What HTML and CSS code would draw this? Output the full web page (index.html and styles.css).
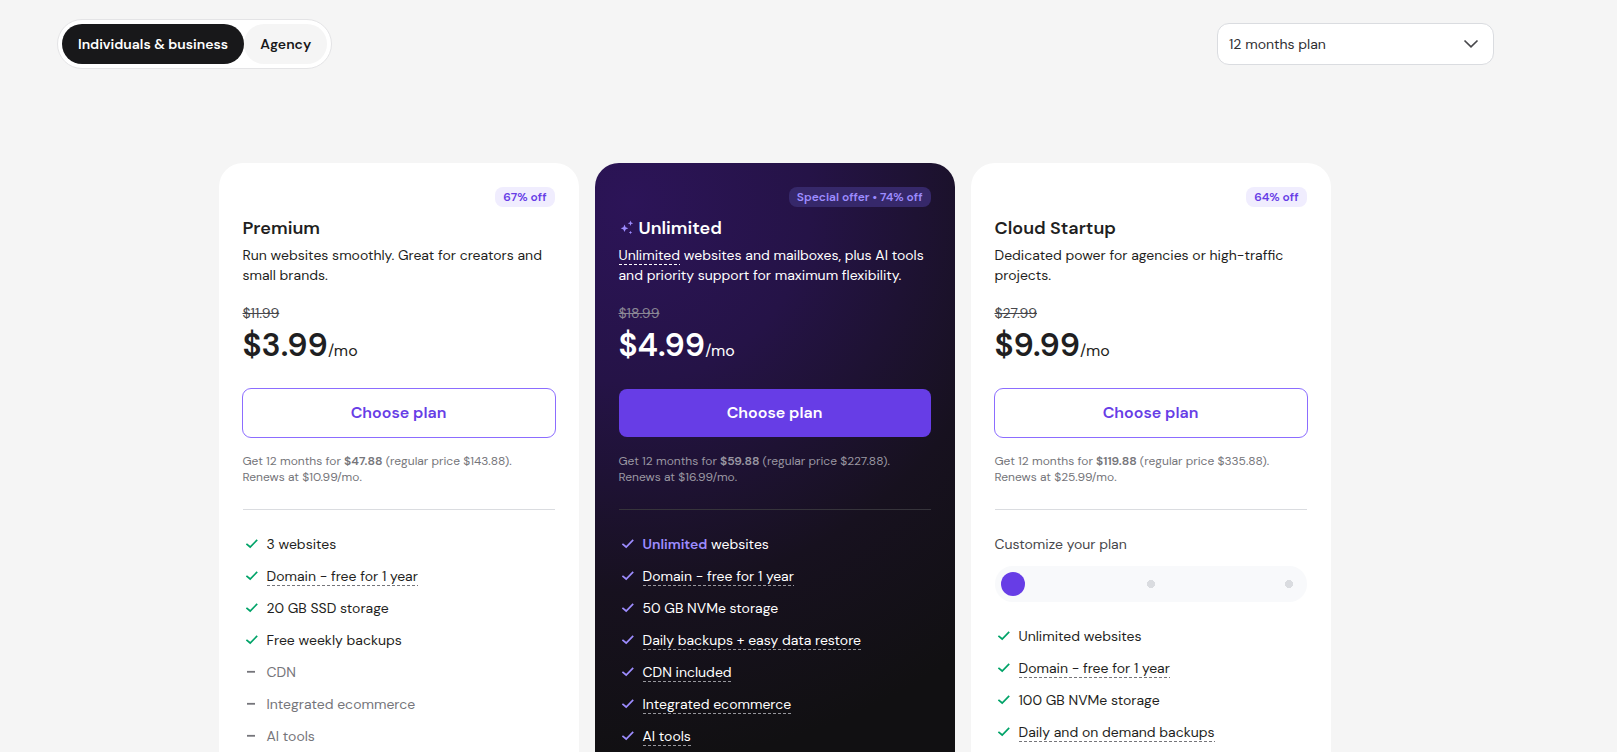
FILE: index.html
```html
<!DOCTYPE html>
<html lang="en">
<head>
<meta charset="utf-8">
<meta name="viewport" content="width=device-width, initial-scale=1">
<title>Hosting plans</title>
<link rel="stylesheet" href="styles.css">
</head>
<body>
<svg class="sprite" aria-hidden="true">
  <symbol id="check" viewBox="0 0 20 20"><path d="M3.400 9.800 7.200 13 14.200 5.900" fill="none" stroke="currentColor" stroke-width="1.700"/></symbol>
  <symbol id="dash" viewBox="0 0 20 20"><path d="M4 9.800H12" fill="none" stroke="currentColor" stroke-width="1.800"/></symbol>
  <symbol id="sparkles" viewBox="0 0 20 20"><path fill="currentColor" d="M5.500 6.500L6.600 9.200L9.300 10.300L6.600 11.400L5.500 14.100L4.400 11.400L1.700 10.300L4.400 9.200ZM11.500 2.500L12.200 4.600L14.300 5.300L12.200 6L11.500 8.100L10.800 6L8.700 5.300L10.800 4.600ZM11.500 12.700L12 14L13.300 14.500L12 15L11.500 16.300L11 15L9.700 14.500L11 14Z"/></symbol>
</svg>
<main class="pricing">
  <div class="toolbar">
    <div class="tabs" role="tablist">
      <button class="tab tab--active" role="tab" aria-selected="true">Individuals &amp; business</button>
      <button class="tab" role="tab" aria-selected="false">Agency</button>
    </div>
    <div class="period">
      <select class="period__select" aria-label="Billing period"><option>12 months plan</option></select>
      <svg class="period__arrow" viewBox="0 0 20 20" aria-hidden="true"><path d="M2.500 6.500 9 12.800 15.500 6.500" fill="none" stroke="currentColor" stroke-width="1.700"/></svg>
    </div>
  </div>

  <div class="cards">
    <article class="card">
      <span class="badge">67% off</span>
      <h2 class="card__title">Premium</h2>
      <p class="card__text">Run websites smoothly. Great for creators and small brands.</p>
      <s class="card__old">$11.99</s>
      <p class="card__price">$3.99<span class="card__unit">/mo</span></p>
      <button class="choose">Choose plan</button>
      <p class="terms">Get 12 months for <b>$47.88</b> (regular price $143.88). Renews at $10.99/mo.</p>
      <hr class="rule">
      <ul class="features">
        <li class="feature"><svg class="icon"><use href="#check"/></svg><span>3 websites</span></li>
        <li class="feature"><svg class="icon"><use href="#check"/></svg><span class="tip">Domain - free for 1 year</span></li>
        <li class="feature"><svg class="icon"><use href="#check"/></svg><span>20 GB SSD storage</span></li>
        <li class="feature"><svg class="icon"><use href="#check"/></svg><span>Free weekly backups</span></li>
        <li class="feature feature--off"><svg class="icon"><use href="#dash"/></svg><span>CDN</span></li>
        <li class="feature feature--off"><svg class="icon"><use href="#dash"/></svg><span>Integrated ecommerce</span></li>
        <li class="feature feature--off"><svg class="icon"><use href="#dash"/></svg><span>AI tools</span></li>
      </ul>
    </article>

    <article class="card card--dark">
      <span class="badge">Special offer • 74% off</span>
      <h2 class="card__title"><svg class="icon"><use href="#sparkles"/></svg>Unlimited</h2>
      <p class="card__text"><span class="tip">Unlimited</span> websites and mailboxes, plus AI tools and priority support for maximum flexibility.</p>
      <s class="card__old">$18.99</s>
      <p class="card__price">$4.99<span class="card__unit">/mo</span></p>
      <button class="choose">Choose plan</button>
      <p class="terms">Get 12 months for <b>$59.88</b> (regular price $227.88). Renews at $16.99/mo.</p>
      <hr class="rule">
      <ul class="features">
        <li class="feature"><svg class="icon"><use href="#check"/></svg><span><b class="accent">Unlimited</b> websites</span></li>
        <li class="feature"><svg class="icon"><use href="#check"/></svg><span class="tip">Domain - free for 1 year</span></li>
        <li class="feature"><svg class="icon"><use href="#check"/></svg><span>50 GB NVMe storage</span></li>
        <li class="feature"><svg class="icon"><use href="#check"/></svg><span class="tip">Daily backups + easy data restore</span></li>
        <li class="feature"><svg class="icon"><use href="#check"/></svg><span class="tip">CDN included</span></li>
        <li class="feature"><svg class="icon"><use href="#check"/></svg><span class="tip">Integrated ecommerce</span></li>
        <li class="feature"><svg class="icon"><use href="#check"/></svg><span class="tip">AI tools</span></li>
      </ul>
    </article>

    <article class="card">
      <span class="badge">64% off</span>
      <h2 class="card__title">Cloud Startup</h2>
      <p class="card__text">Dedicated power for agencies or high-traffic projects.</p>
      <s class="card__old">$27.99</s>
      <p class="card__price">$9.99<span class="card__unit">/mo</span></p>
      <button class="choose">Choose plan</button>
      <p class="terms">Get 12 months for <b>$119.88</b> (regular price $335.88). Renews at $25.99/mo.</p>
      <hr class="rule">
      <div class="customize">
        <label for="size">Customize your plan</label>
        <input class="slider" id="size" type="range" min="0" max="2" value="0">
      </div>
      <ul class="features">
        <li class="feature"><svg class="icon"><use href="#check"/></svg><span>Unlimited websites</span></li>
        <li class="feature"><svg class="icon"><use href="#check"/></svg><span class="tip">Domain - free for 1 year</span></li>
        <li class="feature"><svg class="icon"><use href="#check"/></svg><span>100 GB NVMe storage</span></li>
        <li class="feature"><svg class="icon"><use href="#check"/></svg><span class="tip">Daily and on demand backups</span></li>
      </ul>
    </article>
  </div>
</main>
</body>
</html>
```
FILE: styles.css
```css
* { box-sizing: border-box; }

html { height: 100%; overflow: hidden; }

body {
  margin: 0;
  background: #f5f5f5;
  color: #1f1f22;
  font: 14px/20px "DM Sans", Inter, sans-serif;
}

button, select { font: inherit; color: inherit; cursor: pointer; }
h2, p, ul { margin: 0; padding: 0; }
b { font-weight: 600; }

.sprite { display: none; }
.icon { width: 20px; height: 20px; flex: none; }

.pricing { padding: 19px 123px 0 57px; }

.toolbar {
  display: flex;
  justify-content: space-between;
  align-items: center;
}

.tabs {
  display: flex;
  padding: 4px;
  border: 1px solid #e4e4e6;
  border-radius: 25px;
  background: #fff;
}

.tab {
  height: 40px;
  padding: 0 16px;
  border: 0;
  border-radius: 20px;
  background: #f5f5f5;
  color: #18181a;
  font-weight: 600;
}
.tab--active { background: #18181a; color: #fff; }

.period { position: relative; width: 277px; }
.period__select {
  appearance: none;
  display: block;
  width: 100%;
  height: 42px;
  padding: 0 11px;
  border: 1px solid #dadce0;
  border-radius: 12px;
  background: #fff;
  color: #2f2f33;
}
.period__arrow {
  position: absolute;
  top: 11px;
  right: 12px;
  width: 20px;
  height: 20px;
  color: #47474b;
  pointer-events: none;
}

.cards {
  display: grid;
  grid-template-columns: repeat(3, minmax(0, 360px));
  justify-content: center;
  gap: 16px;
  margin-top: 94px;
  padding-right: 2px;
}

.card {
  display: flex;
  flex-direction: column;
  padding: 24px 24px 64px;
  border-radius: 24px;
  background: #fff;
}
.card--dark {
  background: radial-gradient(circle at 10% 6%, #2c1458 0, #251347 180px, #17111f 390px, #111012 560px);
  color: #fff;
}

.badge {
  align-self: flex-end;
  padding: 0 8px;
  border-radius: 8px;
  background: #f0edfe;
  color: #673de6;
  font-size: 12px;
  font-weight: 600;
}
.card--dark .badge { background: #36286a; color: #9d8cff; }

.card__title {
  display: flex;
  align-items: center;
  margin-top: 8px;
  font-size: 18px;
  line-height: 26px;
  font-weight: 600;
}
.card__title .icon { color: #9d8cff; }

.card__text { margin: 4px 0 18px; }
.card__old { color: #47474b; }
.card--dark .card__old { color: #8b8795; }

.card__price {
  margin-bottom: 16px;
  font-size: 32px;
  line-height: 44px;
  font-weight: 600;
}
.card__unit { font-size: 16px; font-weight: 400; }

.choose {
  height: 50px;
  margin: -1px;
  border: 1px solid #8c6dff;
  border-radius: 9px;
  background: #fff;
  color: #673de6;
  font-size: 16px;
  font-weight: 600;
}
.card--dark .choose {
  height: 48px;
  margin: 0;
  border: 0;
  border-radius: 8px;
  background: #673de6;
  color: #fff;
}

.terms {
  margin-top: 16px;
  color: #75757a;
  font-size: 12px;
  line-height: 16px;
}
.card--dark .terms { color: #9a97a2; }

.rule {
  width: 100%;
  height: 1px;
  margin: 24px 0;
  border: 0;
  background: #dadce0;
}
.card--dark .rule { background: #36343b; }

.features {
  display: flex;
  flex-direction: column;
  gap: 12px;
  list-style: none;
}
.feature { display: flex; gap: 4px; height: 20px; }
.feature .icon { color: #00a368; }
.card--dark .icon { color: #9d8cff; }
.feature--off, .feature--off .icon { color: #75757a; }
.accent { color: #9d8cff; }

.tip {
  --dash: currentColor;
  padding-bottom: 1px;
  background: repeating-linear-gradient(90deg, var(--dash) 0 3px, transparent 3px 5px) left bottom / 100% 1px no-repeat;
}
.feature .tip { --dash: #75757a; }
.card--dark .feature .tip { --dash: #96969c; }

.customize { display: grid; gap: 12px; margin-bottom: 24px; color: #47474b; }
.slider {
  appearance: none;
  width: 100%;
  height: 36px;
  margin: 0;
  padding: 0 6px;
  border-radius: 18px;
  background:
    radial-gradient(circle, #dadce0 4px, transparent 4px) center / 12px 12px no-repeat,
    radial-gradient(circle, #dadce0 4px, transparent 4px) right 12px center / 12px 12px no-repeat,
    #f8f9fb;
}
.slider::-webkit-slider-thumb {
  appearance: none;
  width: 24px;
  height: 24px;
  border-radius: 50%;
  background: #673de6;
}
```
